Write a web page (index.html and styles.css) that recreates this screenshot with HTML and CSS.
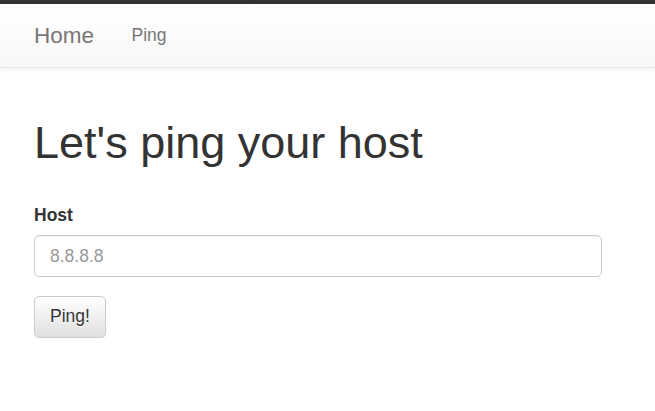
FILE: index.html
```html
<!DOCTYPE html>
<html>
<head>
  <meta charset="UTF-8">
  <meta name="viewport" content="width=device-width, initial-scale=1.0">
  <title>Ping</title>
  <link rel="stylesheet" href="styles.css">
</head>
<body>
  <nav class="navbar">
    <a class="brand" href="#">Home</a>
    <a class="nav-link" href="#">Ping</a>
  </nav>

  <div class="container">
    <h1>Let's ping your host</h1>

    <form class="ping-form" onsubmit="return false;">
      <div class="form-group">
        <label for="host">Host</label>
        <input type="text" id="host" class="form-control" placeholder="8.8.8.8">
      </div>
      <button type="submit" class="btn">Ping!</button>
    </form>
  </div>
</body>
</html>
```

FILE: styles.css
```css
body {
  margin: 0;
  padding: 0;
  font-family: "Liberation Sans", Arial, Helvetica, sans-serif;
  color: #333;
  background: #fff;
  border-top: 4px solid #333;
}

.navbar {
  display: flex;
  align-items: flex-start;
  height: 62.5px;
  padding-left: 34px;
  background: linear-gradient(to bottom, #fff 0%, #f8f8f8 100%);
  border-bottom: 1.25px solid #e7e7e7;
  box-shadow: 0 1px 5px rgba(0, 0, 0, 0.075);
}

.navbar a {
  text-decoration: none;
  color: #777;
  line-height: 25px;
  padding-top: 18.75px;
  padding-bottom: 18.75px;
}

.brand {
  font-size: 22.5px;
  padding-right: 18.75px;
}

.nav-link {
  font-size: 17.5px;
  padding-left: 18.75px;
  padding-right: 18.75px;
}

.container {
  padding: 50px 34px 0 34px;
}

h1 {
  margin: 0 0 36px 0;
  font-size: 45px;
  font-weight: 500;
  line-height: 49.5px;
}

.form-group {
  margin-bottom: 18.75px;
}

label {
  display: block;
  margin-bottom: 7px;
  font-size: 17.5px;
  font-weight: bold;
  line-height: 25px;
}

.form-control {
  display: block;
  box-sizing: border-box;
  width: 568px;
  height: 42px;
  padding: 7.5px 15px;
  font-family: inherit;
  font-size: 17.5px;
  line-height: 25px;
  color: #555;
  background: #fff;
  border: 1.25px solid #ccc;
  border-radius: 5px;
  box-shadow: inset 0 1px 1px rgba(0, 0, 0, 0.075);
  outline: none;
}

.form-control::placeholder {
  color: #999;
}

.btn {
  box-sizing: border-box;
  height: 42px;
  padding: 7.5px 15px;
  font-family: inherit;
  font-size: 17.5px;
  line-height: 25px;
  color: #333;
  text-shadow: 0 1px 0 #fff;
  background: linear-gradient(to bottom, #fff 0%, #e0e0e0 100%);
  border: 1.25px solid #ccc;
  border-radius: 5px;
  box-shadow: inset 0 1px 0 rgba(255, 255, 255, 0.15), 0 1px 1px rgba(0, 0, 0, 0.075);
  cursor: pointer;
}
```
